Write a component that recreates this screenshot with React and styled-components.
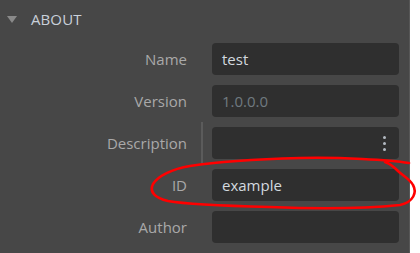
import React from "react";
import styled, { createGlobalStyle } from "styled-components";

const GlobalStyle = createGlobalStyle`
    html, body {
        margin: 0;
        padding: 0;
        background: #ffffff;
    }
    body {
        font-family: "Open Sans", "Liberation Sans", sans-serif;
    }
`;

const Page = styled.div`
    position: relative;
    width: 420px;
    height: 253px;
    display: flex;
    overflow: hidden;
`;

const Panel = styled.div`
    width: 410px;
    height: 100%;
    background: #474747;
    border-right: 1px solid #575757;
    box-sizing: border-box;
`;

const Header = styled.div`
    height: 38px;
    display: flex;
    align-items: center;
    padding-left: 7px;
    gap: 14px;
    color: #c9d0da;
    font-size: 15px;
    letter-spacing: 0.1px;
`;

const Arrow = styled.span`
    width: 0;
    height: 0;
    border-left: 5px solid transparent;
    border-right: 5px solid transparent;
    border-top: 7px solid #8a8a8a;
    margin-top: 1px;
`;

const Rows = styled.div`
    display: flex;
    flex-direction: column;
    gap: 10px;
    padding: 5px 10px 0 0;
`;

const Row = styled.div`
    display: grid;
    grid-template-columns: 187px 1fr;
    column-gap: 25px;
    align-items: center;
    height: 32px;
`;

const Label = styled.div`
    text-align: right;
    color: #a9a9a9;
    font-size: 15px;
`;

const Field = styled.div`
    position: relative;
    height: 32px;
    background: #2f2f2f;
    border-radius: 4px;
    display: flex;
    align-items: center;
    padding: 0 10px;
    color: ${(p) => (p.placeholder ? "#707a80" : "#d3d9df")};
    font-size: 15px;
    box-sizing: border-box;

    ${(p) =>
        p.divider &&
        `
        &::before {
            content: "";
            position: absolute;
            left: -11px;
            top: -5px;
            bottom: -4px;
            width: 2px;
            background: #5b5b5b;
        }
    `}
`;

const Kebab = styled.div`
    margin-left: auto;
    margin-right: 3px;
    display: flex;
    flex-direction: column;
    gap: 3px;

    span {
        width: 3px;
        height: 3px;
        border-radius: 50%;
        background: #b3bac2;
    }
`;

const Scribble = styled.svg`
    position: absolute;
    left: 0;
    top: 0;
    pointer-events: none;
`;

const rows = [
    { label: "Name", value: "test" },
    { label: "Version", value: "1.0.0.0", placeholder: true },
    { label: "Description", value: "", menu: true },
    { label: "ID", value: "example" },
    { label: "Author", value: "" },
];

const App = () => {
    return (
        <Page>
            <GlobalStyle />
            <Panel>
                <Header>
                    <Arrow />
                    ABOUT
                </Header>
                <Rows>
                    {rows.map((r) => (
                        <Row key={r.label}>
                            <Label>{r.label}</Label>
                            <Field placeholder={r.placeholder} divider={r.menu}>
                                {r.value}
                                {r.menu && (
                                    <Kebab>
                                        <span />
                                        <span />
                                        <span />
                                    </Kebab>
                                )}
                            </Field>
                        </Row>
                    ))}
                </Rows>
            </Panel>
            <Scribble width="420" height="253" viewBox="0 0 420 253">
                <path
                    d="M409 163 C 390 160, 340 157, 300 158 C 260 159, 215 162, 190 166 C 172 169, 158 176, 153 184 C 149 192, 155 198, 168 201 C 190 205, 230 206, 270 207 C 320 209, 370 208, 400 205 C 414 202, 417 192, 413 185 C 410 179, 402 175, 398 171 C 394 167, 391 164, 385 162"
                    fill="none"
                    stroke="#ff0000"
                    strokeWidth="2.6"
                    strokeLinecap="round"
                    strokeLinejoin="round"
                />
            </Scribble>
        </Page>
    );
};

export default App;
